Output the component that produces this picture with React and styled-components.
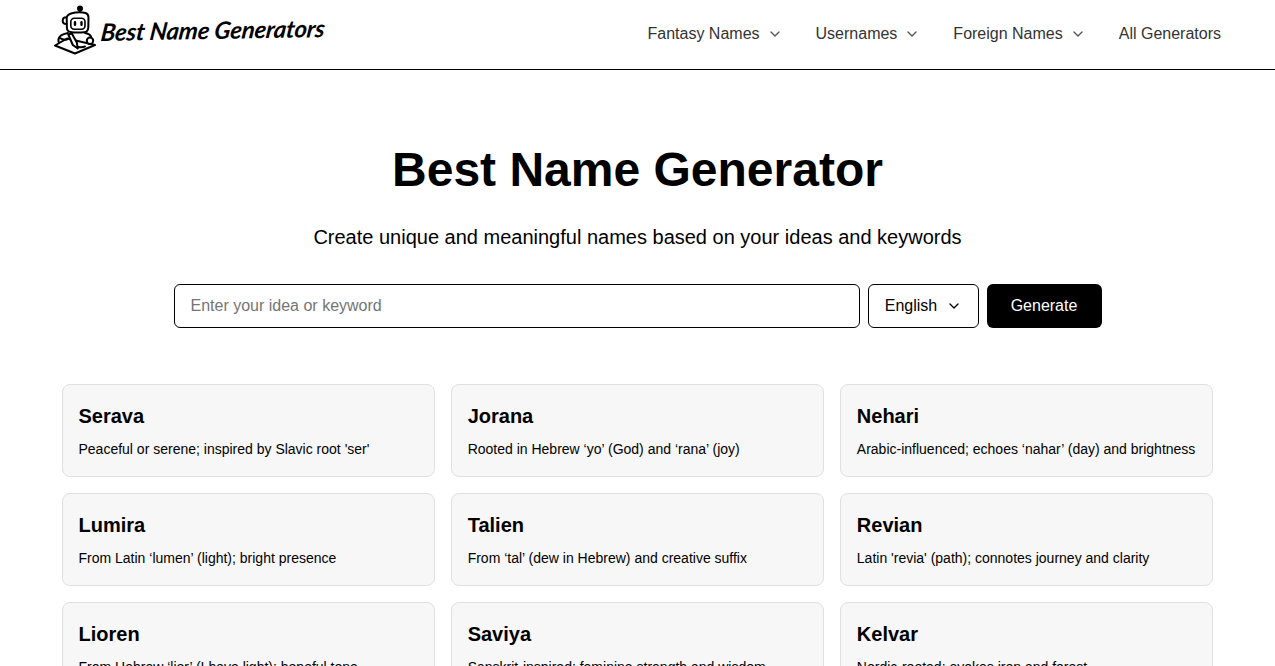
import React from "react";
import styled, { createGlobalStyle } from "styled-components";
import { LuChevronDown } from "react-icons/lu";

const GlobalStyle = createGlobalStyle`
  * {
    box-sizing: border-box;
  }
  html,
  body {
    margin: 0;
    height: 100%;
    overflow: hidden;
    background: #fff;
    font-family: "Liberation Sans", Arial, sans-serif;
    color: #000;
  }
`;

const Header = styled.header`
  height: 70px;
  border-bottom: 1px solid #000;
  padding: 0 54px;
  display: flex;
  align-items: center;
  justify-content: space-between;
`;

const Brand = styled.a`
  display: flex;
  align-items: center;
  gap: 4px;
  padding-bottom: 9px;
  color: #000;
  text-decoration: none;
`;

const BrandName = styled.span`
  font-family: "Lato", "Liberation Sans", sans-serif;
  font-style: italic;
  font-weight: 700;
  font-size: 24px;
  line-height: 30px;
  letter-spacing: -0.18px;
  white-space: nowrap;
  transform: rotate(-1deg) skewX(-8deg);
`;

const Nav = styled.nav`
  display: flex;
  align-items: center;
  gap: 33px;
  padding-bottom: 1px;
`;

const NavItem = styled.a`
  display: flex;
  align-items: center;
  gap: 7px;
  font-size: 16px;
  line-height: 24px;
  color: #333;
  svg {
    width: 16px;
    height: 16px;
    color: #555;
  }
`;

const Hero = styled.section`
  padding-top: 70px;
  display: flex;
  flex-direction: column;
  align-items: center;
`;

const Title = styled.h1`
  margin: 0;
  font-size: 48px;
  line-height: 60px;
  font-weight: 700;
`;

const Subtitle = styled.p`
  margin: 23px 0 0;
  font-size: 20px;
  line-height: 28px;
`;

const SearchForm = styled.form`
  margin-top: 33px;
  width: 928px;
  display: flex;
  gap: 8px;
`;

const KeywordInput = styled.input`
  flex: 1;
  min-width: 0;
  height: 44px;
  padding: 0 16px;
  border: 1px solid #000;
  border-radius: 6px;
  outline: none;
  background: #fff;
  font: 16px "Liberation Sans", Arial, sans-serif;
  color: #000;
  &::placeholder {
    color: #757575;
    opacity: 1;
  }
`;

const LanguageSelect = styled.button`
  width: 111px;
  height: 44px;
  padding: 0 0 0 1px;
  border: 1px solid #000;
  border-radius: 6px;
  background: #fff;
  color: #000;
  font: 16px "Liberation Sans", Arial, sans-serif;
  display: flex;
  align-items: center;
  justify-content: center;
  gap: 9px;
  svg {
    width: 16px;
    height: 16px;
  }
`;

const GenerateButton = styled.button`
  width: 115px;
  height: 44px;
  padding: 0;
  border: none;
  border-radius: 6px;
  background: #000;
  color: #fff;
  font: 16px "Liberation Sans", Arial, sans-serif;
`;

const NameGrid = styled.section`
  margin: 56px 0 0 61.5px;
  width: 1151.5px;
  display: grid;
  grid-template-columns: repeat(3, 1fr);
  gap: 16px;
`;

const NameCard = styled.article`
  height: 93px;
  padding: 17px 16px 0;
  background: #f7f7f7;
  border: 1px solid #e0e0e0;
  border-radius: 8px;
`;

const CardName = styled.h3`
  margin: 0;
  font-size: 20px;
  line-height: 28px;
  font-weight: 700;
`;

const CardMeaning = styled.p`
  margin: 9px 0 0;
  font-size: 14px;
  line-height: 20px;
  white-space: nowrap;
`;

const names = [
  ["Serava", "Peaceful or serene; inspired by Slavic root 'ser'"],
  ["Jorana", "Rooted in Hebrew ‘yo’ (God) and ‘rana’ (joy)"],
  ["Nehari", "Arabic-influenced; echoes ‘nahar’ (day) and brightness"],
  ["Lumira", "From Latin ‘lumen’ (light); bright presence"],
  ["Talien", "From ‘tal’ (dew in Hebrew) and creative suffix"],
  ["Revian", "Latin 'revia' (path); connotes journey and clarity"],
  ["Lioren", "From Hebrew ‘lior’ (I have light); hopeful tone"],
  ["Saviya", "Sanskrit-inspired; feminine strength and wisdom"],
  ["Kelvar", "Nordic-rooted; evokes iron and forest"],
];

const RobotLogo = () => (
  <svg width="43" height="50" viewBox="0 0 43 50" fill="none" stroke="#000" strokeWidth="2" strokeLinecap="round" strokeLinejoin="round">
    <circle cx="26" cy="3.4" r="2" fill="#000" />
    <path d="M26 5.500v3" />
    <path d="M17 8.500c5-1.300 11-1.300 14.500-.5 2 .6 3 2 3 4.500l-.2 10c-.2 3-1.600 4.500-4 4.700-5 .5-10 .5-14-.2-2.200-.4-3.300-2-3.400-4.500l-.2-9.500c0-2.500 1.800-3.700 4.300-4.500z" fill="#fff" />
    <path d="M12.500 12.300c-2.500 0-3.800 1.500-3.800 3.400s1.300 3.300 3.800 3.300" />
    <rect x="16.800" y="13.300" width="14.200" height="11" rx="3.500" fill="#fff" strokeWidth="1.600" />
    <path d="M21 17.300v2.500M27.500 17.300v2.500" strokeWidth="2.400" />
    <path d="M14 28c-2.500.5-5 1-7 2.500-2.500 2-3 5-2 7.500" />
    <path d="M31 28c3 .5 5 1.500 6 3.500" />
    <path d="M1 40.500 13 33.500l28 6.500L21 48.500z" fill="#fff" />
    <path d="M14.300 29.500l3.500-1 5 9 1 6-5-3.500z" fill="#fff" />
    <circle cx="36" cy="35.700" r="3.200" fill="#fff" />
    <path d="M6 33c2 1.500 4 2 7 1.500" />
    <path d="M24 42c2.500.3 5 .2 7-.5" />
  </svg>
);

const App = () => (
  <>
    <GlobalStyle />
    <Header>
      <Brand href="#">
        <RobotLogo />
        <BrandName>Best Name Generators</BrandName>
      </Brand>
      <Nav>
        <NavItem>Fantasy Names <LuChevronDown /></NavItem>
        <NavItem>Usernames <LuChevronDown /></NavItem>
        <NavItem>Foreign Names <LuChevronDown /></NavItem>
        <NavItem>All Generators</NavItem>
      </Nav>
    </Header>
    <main>
      <Hero>
        <Title>Best Name Generator</Title>
        <Subtitle>Create unique and meaningful names based on your ideas and keywords</Subtitle>
        <SearchForm onSubmit={(e) => e.preventDefault()}>
          <KeywordInput placeholder="Enter your idea or keyword" />
          <LanguageSelect type="button">English <LuChevronDown /></LanguageSelect>
          <GenerateButton>Generate</GenerateButton>
        </SearchForm>
      </Hero>
      <NameGrid>
        {names.map(([name, meaning]) => (
          <NameCard key={name}>
            <CardName>{name}</CardName>
            <CardMeaning>{meaning}</CardMeaning>
          </NameCard>
        ))}
      </NameGrid>
    </main>
  </>
);

export default App;
